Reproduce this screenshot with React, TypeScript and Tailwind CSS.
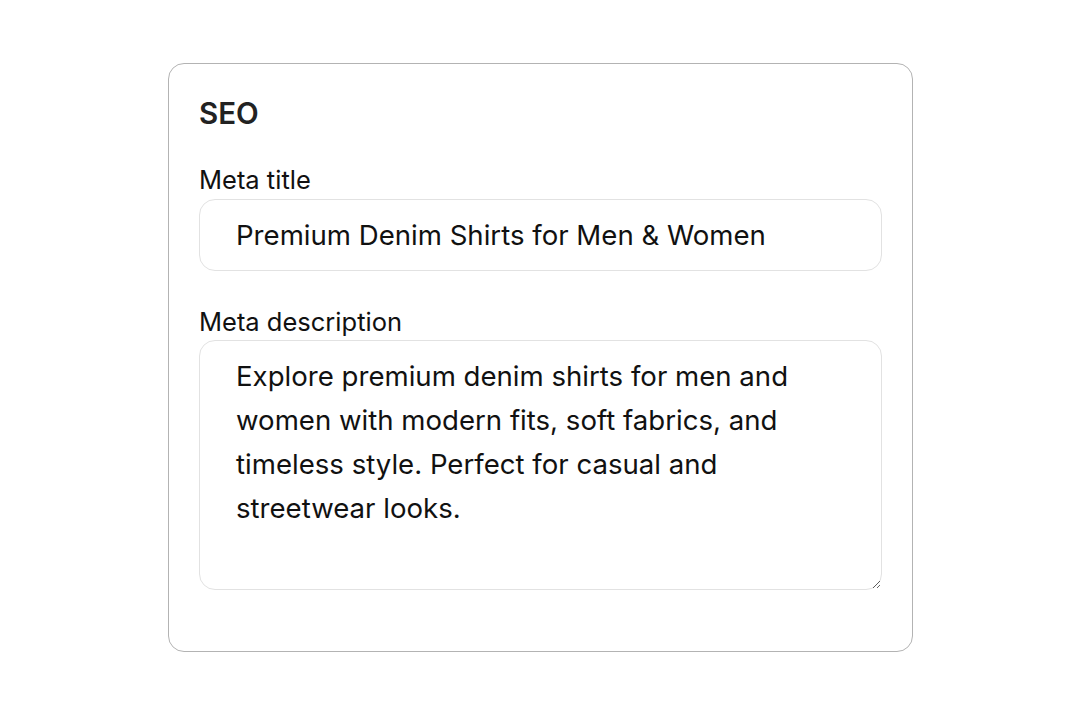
import { useState } from "react";

// SEO settings card for a product page
export default function App() {
  const [title, setTitle] = useState("Premium Denim Shirts for Men & Women");
  const [description, setDescription] = useState(
    "Explore premium denim shirts for men and women with modern fits, soft fabrics, and timeless style. Perfect for casual and streetwear looks."
  );

  return (
    <div
      className="flex h-[715px] w-full items-center justify-center bg-white text-[#111]"
      style={{ fontFamily: "Inter, 'Noto Sans', sans-serif" }}
    >
      <div className="flex h-[589px] w-[745px] flex-col rounded-[16px] border border-[#b3b3b3] px-[30px] pt-[31px]">
        <h2 className="text-[29.5px] font-semibold leading-[36px] text-[#222]">SEO</h2>

        <label className="mt-[32px] block text-[25.5px] leading-[34px]">Meta title</label>
        <input
          value={title}
          onChange={(e) => setTitle(e.target.value)}
          className="mt-[2px] h-[72px] w-full rounded-[16px] border border-[#e2e2e2] px-[36px] text-[27.6px] outline-none"
        />

        <label className="mt-[34px] block text-[25.5px] leading-[34px]">Meta description</label>
        <textarea
          value={description}
          onChange={(e) => setDescription(e.target.value)}
          className="mt-[1px] h-[250px] w-full rounded-[16px] border border-[#e2e2e2] px-[36px] pt-[13px] text-[27.6px] leading-[44px] outline-none"
        />
      </div>
    </div>
  );
}
